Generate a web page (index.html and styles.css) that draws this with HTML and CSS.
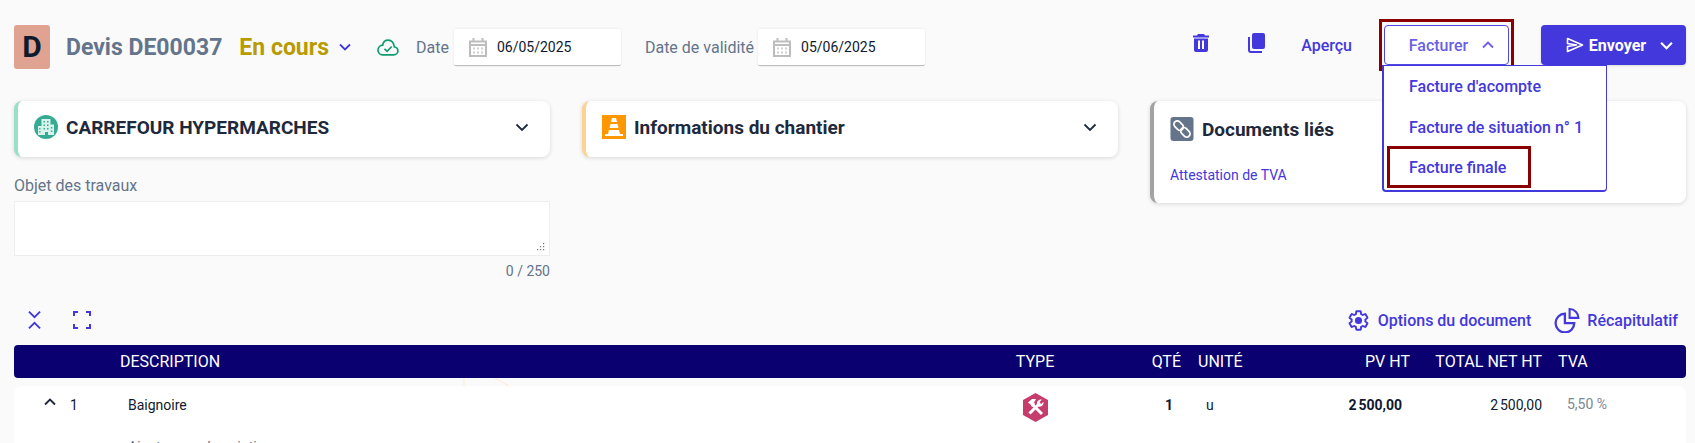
FILE: index.html
```html
<!DOCTYPE html>
<html lang="fr">
<head>
  <meta charset="UTF-8">
  <meta name="viewport" content="width=device-width, initial-scale=1.0">
  <title>Devis DE00037</title>
  <link rel="stylesheet" href="styles.css">
</head>
<body>
  <div class="page">
    <!-- Top bar -->
    <header class="topbar">
      <div class="avatar">D</div>
      <h1 class="doc-title">Devis DE00037</h1>
      <span class="doc-status">En cours</span>
      <svg class="status-chevron" viewBox="0 0 12 8"><path d="M1 1.500l5 5 5-5" fill="none" stroke="#4338dc" stroke-width="1.8"/></svg>
      <svg class="cloud-icon" viewBox="0 0 22 17"><path d="M5.500 15.800h11.200c2.300 0 4.200-1.700 4.200-3.900 0-2-1.500-3.600-3.500-3.900C16.800 4 14.400 1.200 11.200 1.200 8.300 1.200 6.100 3.300 5.700 6.200 3 6.400 1 8.500 1 11c0 2.700 2 4.800 4.500 4.800z" fill="none" stroke="#0f9d6e" stroke-width="1.700"/><path d="M7.500 9.800l2.600 2.500 4.600-4.800" fill="none" stroke="#0f9d6e" stroke-width="1.700"/></svg>
      <label class="date-label date-label-first">Date</label>
      <div class="date-input date-input-first">
        <svg class="cal-icon" viewBox="0 0 18 20"><path d="M1 4.500h16v14.500H1zM1 8h16" fill="none" stroke="#bdbdbd" stroke-width="2"/><path d="M4.500 1v4M13.500 1v4" stroke="#bdbdbd" stroke-width="2"/><path d="M4 10.500h2v2H4zM8 10.500h2v2H8zM12 10.500h2v2h-2zM4 14.500h2v2H4zM8 14.500h2v2H8zM12 14.500h2v2h-2z" fill="#d0d0d0"/></svg>
        <span>06/05/2025</span>
      </div>
      <label class="date-label date-label-second">Date de validité</label>
      <div class="date-input">
        <svg class="cal-icon" viewBox="0 0 18 20"><path d="M1 4.500h16v14.500H1zM1 8h16" fill="none" stroke="#bdbdbd" stroke-width="2"/><path d="M4.500 1v4M13.500 1v4" stroke="#bdbdbd" stroke-width="2"/><path d="M4 10.500h2v2H4zM8 10.500h2v2H8zM12 10.500h2v2h-2zM4 14.500h2v2H4zM8 14.500h2v2H8zM12 14.500h2v2h-2z" fill="#d0d0d0"/></svg>
        <span>05/06/2025</span>
      </div>

      <div class="actions">
        <svg class="trash-icon" viewBox="0 0 16 18"><path d="M5 0h6l1 1.500h4v2H0v-2h4zM1 4.500h14V16c0 1.100-.9 2-2 2H3c-1.100 0-2-.9-2-2z" fill="#4338dc"/><path d="M5 6.500h2v8.500H5zM9 6.500h2v8.500H9z" fill="#fff"/></svg>
        <svg class="copy-icon" viewBox="0 0 17 20"><rect x="4" y="0" width="13" height="16" rx="2" fill="#4338dc"/><path d="M1 4v13c0 1 .8 2 2 2h11" fill="none" stroke="#4338dc" stroke-width="2"/></svg>
        <span class="preview-link">Aperçu</span>
        <div class="invoice-wrap">
          <button class="invoice-btn">Facturer
            <svg class="invoice-chevron" viewBox="0 0 12 8"><path d="M1 6.500l5-5 5 5" fill="none" stroke="#6a5fe3" stroke-width="1.800"/></svg>
          </button>
          <div class="red-box red-box-button"></div>
          <div class="invoice-menu">
            <div class="menu-item">Facture d'acompte</div>
            <div class="menu-item">Facture de situation n° 1</div>
            <div class="menu-item">Facture finale</div>
            <div class="red-box red-box-item"></div>
          </div>
        </div>
        <button class="send-btn">
          <svg class="send-icon" viewBox="0 0 18 16"><path d="M1.500 1.500L16.500 8l-15 6.500v-5l9-1.500-9-1.500z" fill="none" stroke="#fff" stroke-width="1.600" stroke-linejoin="round"/></svg>
          Envoyer
          <svg class="send-chevron" viewBox="0 0 12 8"><path d="M1 1.500l5 5 5-5" fill="none" stroke="#fff" stroke-width="1.900"/></svg>
        </button>
      </div>
    </header>

    <!-- Cards -->
    <section class="cards">
      <div class="column">
        <div class="card card-client">
          <svg class="card-icon" viewBox="0 0 24 24"><circle cx="12" cy="12" r="12" fill="#36ab93"/><path d="M7.500 20V4h9v5.500h3.500V20h-6v-3h-3v3zM4 11h3.500v9H4z" fill="#d8f2ec"/><path d="M9.500 6h1.500v1.500H9.500zM13 6h1.500v1.500H13zM9.500 9.500h1.500V11H9.500zM13 9.500h1.500V11H13zM9.500 13h1.500v1.500H9.500zM13 13h1.500v1.500H13zM16.800 12h1.500v1.500h-1.500zM16.800 15.500h1.500V17h-1.500zM5.200 13h1.300v1.500H5.200zM5.200 16h1.300v1.500H5.200z" fill="#36ab93"/></svg>
          <h2 class="card-title">CARREFOUR HYPERMARCHES</h2>
          <svg class="card-chevron" viewBox="0 0 14 9"><path d="M1.500 1.500L7 7l5.500-5.500" fill="none" stroke="#1e293b" stroke-width="1.800"/></svg>
        </div>
        <label class="field-label">Objet des travaux</label>
        <div class="field-wrap">
          <textarea class="field-area"></textarea>
          <svg class="field-grip" viewBox="0 0 8 8"><path d="M6 0h1.200v1.200H6zM3 3h1.200v1.200H3zM6 3h1.200v1.200H6zM0 6h1.200v1.200H0zM3 6h1.200v1.200H3zM6 6h1.200v1.200H6z" fill="#777"/></svg>
        </div>
        <div class="field-count">0 / 250</div>
      </div>
      <div class="column">
        <div class="card card-site">
          <svg class="card-icon" viewBox="0 0 24 24"><rect width="24" height="24" fill="#ff9800"/><path d="M10 3h4l1 4H9zM8.500 9h7l1 4h-9zM7 15h10l1 4h3v2H3v-2h3z" fill="#fff"/></svg>
          <h2 class="card-title">Informations du chantier</h2>
          <svg class="card-chevron" viewBox="0 0 14 9"><path d="M1.500 1.500L7 7l5.500-5.500" fill="none" stroke="#1e293b" stroke-width="1.800"/></svg>
        </div>
      </div>
      <div class="column">
        <div class="card card-docs">
          <div class="docs-head">
            <svg class="card-icon" viewBox="0 0 24 25"><rect width="24" height="25" rx="3" fill="#64748b"/><rect x="3" y="5.500" width="11" height="7" rx="3.500" transform="rotate(45 8.500 9)" fill="none" stroke="#fff" stroke-width="1.800"/><rect x="10" y="12.500" width="11" height="7" rx="3.500" transform="rotate(45 15.500 16)" fill="none" stroke="#fff" stroke-width="1.800"/></svg>
            <h2 class="card-title">Documents liés</h2>
          </div>
          <div class="docs-link">Attestation de TVA</div>
        </div>
      </div>
    </section>

    <!-- Tools above the table -->
    <div class="tools">
      <svg class="collapse-icon" viewBox="0 0 14 20"><path d="M1 1l6 6 6-6M1 19l6-6 6 6" fill="none" stroke="#4338dc" stroke-width="2"/></svg>
      <svg class="expand-icon" viewBox="0 0 18 18"><path d="M1 5V1h4M13 1h4v4M1 13v4h4M17 13v4h-4" fill="none" stroke="#4338dc" stroke-width="2"/></svg>
      <div class="tool-link tool-options">
        <svg class="gear-icon" viewBox="0 0 24 24"><path d="M19.140 12.940c.04-.3.06-.61.06-.94 0-.32-.02-.64-.07-.94l2.030-1.580c.18-.14.23-.41.12-.61l-1.920-3.320c-.12-.22-.37-.29-.59-.22l-2.390.96c-.5-.38-1.030-.7-1.620-.94l-.36-2.540c-.04-.24-.24-.41-.48-.41h-3.840c-.24 0-.43.17-.47.41l-.36 2.540c-.59.24-1.130.57-1.620.94l-2.390-.96c-.22-.08-.47 0-.59.22L2.740 8.870c-.12.21-.08.47.12.61l2.030 1.580c-.05.3-.09.63-.09.94s.02.64.07.94l-2.030 1.580c-.18.14-.23.41-.12.61l1.920 3.320c.12.22.37.29.59.22l2.390-.96c.5.38 1.030.7 1.620.94l.36 2.540c.05.24.24.41.48.41h3.840c.24 0 .44-.17.47-.41l.36-2.540c.59-.24 1.130-.56 1.620-.94l2.390.96c.22.08.47 0 .59-.22l1.920-3.320c.12-.22.07-.47-.12-.61z" fill="none" stroke="#4338dc" stroke-width="2"/><circle cx="12" cy="12" r="3.700" fill="#4338dc"/></svg>
        Options du document
      </div>
      <div class="tool-link">
        <svg class="pie-icon" viewBox="0 0 25 24"><path d="M10.500 5.500a9 9 0 1 0 9 9h-9z" fill="none" stroke="#4338dc" stroke-width="2.200"/><path d="M15 1v8.500h8.500A8.500 8.500 0 0 0 15 1z" fill="none" stroke="#4338dc" stroke-width="2"/></svg>
        Récapitulatif
      </div>
    </div>

    <!-- Lines table -->
    <div class="table">
      <div class="table-head">
        <div></div>
        <div>DESCRIPTION</div>
        <div class="cell-center">TYPE</div>
        <div class="cell-right">QTÉ</div>
        <div class="cell-unit">UNITÉ</div>
        <div class="cell-right">PV HT</div>
        <div class="cell-right">TOTAL NET HT</div>
        <div class="cell-vat">TVA</div>
      </div>
      <svg class="watermark" viewBox="0 0 50 8"><path d="M1 0v8M32 0l14 8" fill="none" stroke="#fde9cf" stroke-width="1"/></svg>
      <div class="table-row">
        <div class="row-index">
          <svg class="row-chevron" viewBox="0 0 12 8"><path d="M1 6.500l5-5 5 5" fill="none" stroke="#1e293b" stroke-width="1.900"/></svg>
          <span>1</span>
        </div>
        <div class="row-desc">
          <div>Baignoire</div>
          <div class="row-add">Ajouter une description</div>
        </div>
        <div class="cell-center">
          <svg class="type-icon" viewBox="0 0 25 29"><path d="M12.500 0L25 7v15l-12.500 7L0 22V7z" fill="#c53d6b"/><path d="M9 11l10 10" stroke="#fff" stroke-width="3"/><path d="M5 9.500l4-3.500h4l-1 2-1 1 1 2-3 3-1.500-2.500z" fill="#fff"/><path d="M6.500 20.500l9-9" stroke="#fff" stroke-width="3"/><path d="M14 11.500c-.5-3 1.500-5.500 5-5l-2.500 2.500 1.500 2 2.500-2c.5 3-2.500 5.500-5 4.500z" fill="#fff"/></svg>
        </div>
        <div class="cell-right row-cell row-qty">1</div>
        <div class="cell-unit row-cell row-unit">u</div>
        <div class="cell-right row-cell row-price">2&#8239;500,00</div>
        <div class="cell-right row-total">2&#8239;500,00</div>
        <div class="cell-vat row-vat">5,50 %</div>
      </div>
    </div>
  </div>
</body>
</html>
```

FILE: styles.css
```css
html, body {
  margin: 0;
  height: 100%;
  overflow: hidden;
}

body {
  font-family: Roboto, "Liberation Sans", sans-serif;
  font-size: 14px;
  background-color: #fafafa;
  color: #1e293b;
}

.page {
  padding: 25px 9px 0 14px;
}

button {
  font-family: inherit;
  cursor: pointer;
}

/* Top bar */
.topbar {
  display: flex;
  align-items: center;
  height: 44px;
}

.avatar {
  width: 36px;
  height: 44px;
  border-radius: 3px;
  background-color: #e0a392;
  color: #0f1a2e;
  font-size: 30px;
  font-weight: 700;
  line-height: 44px;
  text-align: center;
}

.doc-title {
  margin: 0 0 0 16px;
  font-size: 23px;
  font-weight: 700;
  color: #64748b;
}

.doc-status {
  margin-left: 17px;
  font-size: 23px;
  font-weight: 700;
  color: #b89b00;
}

.status-chevron {
  width: 12px;
  height: 8px;
  margin-left: 10px;
}

.cloud-icon {
  width: 22px;
  height: 17px;
  margin-left: 26px;
}

.date-label {
  font-size: 16px;
  color: #64748b;
}

.date-label-first {
  margin-left: 17px;
}

.date-label-second {
  margin-left: 24px;
}

.date-input {
  display: flex;
  align-items: center;
  box-sizing: border-box;
  width: 167px;
  height: 37px;
  margin-left: 4px;
  padding-left: 15px;
  background-color: #fff;
  border-bottom: 1px solid #bbb;
  border-radius: 2px;
  box-shadow: 0 0 3px rgba(0, 0, 0, 0.08);
  font-size: 14px;
  color: #0f1a2e;
}

.date-input-first {
  margin-left: 5px;
}

.cal-icon {
  width: 18px;
  height: 20px;
  margin-right: 10px;
}

.actions {
  display: flex;
  align-self: flex-start;
  align-items: center;
  height: 40px;
  margin-left: auto;
}

.trash-icon {
  width: 16px;
  height: 18px;
  margin-top: -4px;
}

.copy-icon {
  width: 17px;
  height: 20px;
  margin-top: -4px;
  margin-left: 39px;
}

.preview-link {
  margin-left: 36px;
  font-size: 16px;
  font-weight: 500;
  color: #4338dc;
}

.invoice-wrap {
  position: relative;
  margin-left: 32px;
}

.invoice-btn {
  display: flex;
  align-items: center;
  justify-content: center;
  box-sizing: border-box;
  width: 125px;
  height: 40px;
  padding: 0 0 0 10px;
  background-color: #fff;
  border: 1px solid #4f46e5;
  border-radius: 4px;
  font-size: 16px;
  font-weight: 500;
  color: #6a5fe3;
}

.invoice-chevron {
  width: 12px;
  height: 8px;
  margin-left: 14px;
}

.red-box {
  position: absolute;
  box-sizing: border-box;
  border: 3px solid #8b0000;
  pointer-events: none;
}

.red-box-button {
  left: -5px;
  top: -6px;
  width: 135px;
  height: 52px;
}

.invoice-menu {
  position: absolute;
  z-index: 2;
  left: -2px;
  top: 40px;
  box-sizing: border-box;
  width: 225px;
  height: 127px;
  padding-top: 1px;
  background-color: #fff;
  border: 1px solid #4338dc;
  border-width: 1px 1px 2px 2px;
  border-radius: 0 0 4px 4px;
}

.menu-item {
  height: 40.500px;
  padding-left: 25px;
  font-size: 16px;
  font-weight: 500;
  line-height: 40px;
  color: #4338dc;
}

.red-box-item {
  left: 3px;
  top: 80px;
  width: 144px;
  height: 42px;
}

.send-btn {
  display: flex;
  align-items: center;
  justify-content: center;
  width: 145px;
  height: 40px;
  margin-left: 32px;
  padding: 0 0 0 12px;
  background-color: #4338dc;
  border: none;
  border-radius: 4px;
  box-shadow: 0 1px 3px rgba(0, 0, 0, 0.12);
  font-size: 16px;
  font-weight: 700;
  color: #fff;
}

.send-icon {
  width: 18px;
  height: 16px;
  margin-right: 5px;
}

.send-chevron {
  width: 13px;
  height: 9px;
  margin-left: 14px;
}

/* Cards */
.cards {
  display: grid;
  grid-template-columns: repeat(3, 1fr);
  gap: 32px;
  margin-top: 32px;
}

.column {
  display: flex;
  flex-direction: column;
}

.card {
  display: flex;
  align-items: center;
  box-sizing: border-box;
  height: 56px;
  padding: 0 21px 4px 16px;
  background-color: #fff;
  border-left: 4px solid #9adfca;
  border-radius: 8px;
  box-shadow: 0 1px 4px rgba(0, 0, 0, 0.14);
}

.card-site {
  border-left-color: #fdd394;
}

.card-docs {
  display: block;
  height: 102px;
  padding: 16px 16px 0 16px;
  border-left-color: #a3a3a3;
}

.docs-head {
  display: flex;
  align-items: center;
}

.docs-link {
  margin-top: 26px;
  font-size: 14px;
  color: #4338dc;
}

.card-icon {
  flex: none;
  width: 24px;
  height: 24px;
  margin-right: 8px;
}

.card-title {
  margin: 0;
  font-size: 19px;
  font-weight: 700;
  color: #1e293b;
}

.card-chevron {
  width: 14px;
  height: 9px;
  margin-left: auto;
}

.field-label {
  margin-top: 21px;
  font-size: 16px;
  line-height: 16px;
  color: #64748b;
}

.field-wrap {
  position: relative;
  margin-top: 7px;
}

.field-area {
  display: block;
  box-sizing: border-box;
  width: 100%;
  height: 55px;
  background-color: #fff;
  border: 1px solid #eee;
  outline: none;
  resize: none;
}

.field-grip {
  position: absolute;
  right: 5px;
  bottom: 5px;
  width: 8px;
  height: 8px;
}

.field-count {
  margin-top: 7px;
  font-size: 14px;
  line-height: 16px;
  text-align: right;
  color: #64748b;
}

/* Tools */
.tools {
  display: flex;
  align-items: center;
  height: 28px;
  margin-top: 27px;
  margin-bottom: 11px;
  padding-left: 14px;
}

.collapse-icon {
  width: 13px;
  height: 20px;
}

.expand-icon {
  width: 18px;
  height: 18px;
  margin-left: 32px;
}

.tool-link {
  display: flex;
  align-items: center;
  margin-left: 23px;
  margin-right: 8px;
  font-size: 16px;
  font-weight: 500;
  color: #4338dc;
}

.tool-options {
  margin-left: auto;
  margin-right: 0;
}

.gear-icon {
  width: 23px;
  height: 23px;
  margin-right: 8px;
}

.pie-icon {
  width: 26px;
  height: 25px;
  margin-right: 7px;
}

/* Table */
.table {
  position: relative;
}

.table-head,
.table-row {
  display: grid;
  grid-template-columns: 106px 870px 90px 101px 119px 110px 132px 144px;
}

.table-head {
  align-items: center;
  height: 33px;
  background-color: #0a0070;
  border-radius: 4px;
  font-size: 16px;
  font-weight: 400;
  color: #fff;
}

.watermark {
  position: absolute;
  left: 449px;
  top: 33px;
  width: 50px;
  height: 8px;
}

.table-row {
  box-sizing: border-box;
  height: 57px;
  margin-top: 8px;
  padding-top: 7px;
  overflow: hidden;
  background-color: #fff;
  border-radius: 8px 8px 0 0;
  font-size: 14px;
  line-height: 16px;
  color: #0f1a2e;
}

.cell-center {
  text-align: center;
}

.cell-right {
  text-align: right;
}

.cell-unit {
  padding-left: 17px;
}

.cell-vat {
  padding-left: 16px;
}

.row-index {
  display: flex;
  align-items: center;
  height: 16px;
  padding: 4px 0 0 30px;
}

.row-chevron {
  width: 12px;
  height: 8px;
  margin: -6px 14px 0 0;
}

.row-desc {
  padding: 4px 0 0 8px;
}

.row-add {
  margin-top: 26px;
  color: #64748b;
}

.type-icon {
  width: 25px;
  height: 29px;
}

.row-cell {
  padding: 4px 8px 0;
}

.row-qty,
.row-price {
  font-weight: 700;
}

.row-unit {
  padding-left: 25px;
}

.row-total {
  padding-top: 4px;
}

.row-vat {
  padding: 3px 0 0 25px;
  color: #7c8794;
}
```
